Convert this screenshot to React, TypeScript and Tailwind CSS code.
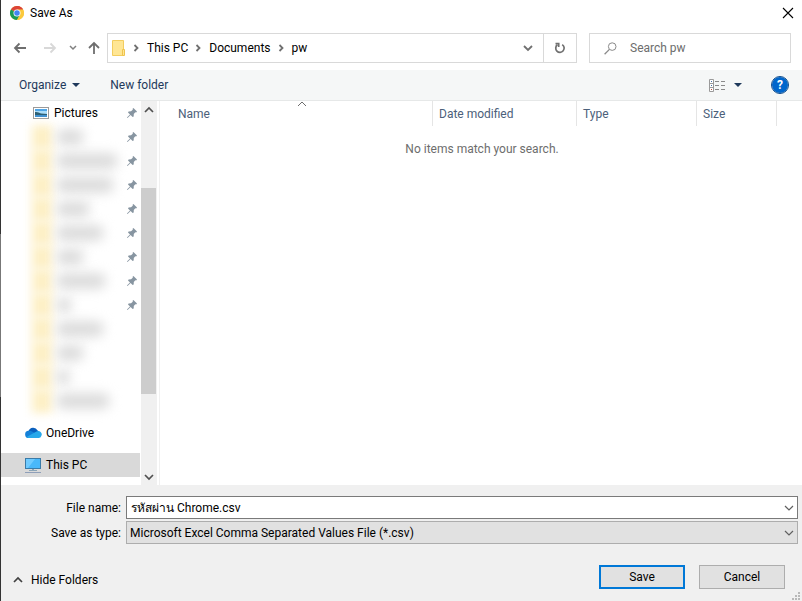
import React, { useState } from 'react';

const QUICK_ACCESS = [
  { id: 1, bar: 'w-[28px]', pinned: true },
  { id: 2, bar: 'w-[62px]', pinned: true },
  { id: 3, bar: 'w-[58px]', pinned: true },
  { id: 4, bar: 'w-[34px]', pinned: true },
  { id: 5, bar: 'w-[48px]', pinned: true },
  { id: 6, bar: 'w-[28px]', pinned: true },
  { id: 7, bar: 'w-[50px]', pinned: true },
  { id: 8, bar: 'w-[16px]', pinned: true },
  { id: 9, bar: 'w-[48px]', pinned: false },
  { id: 10, bar: 'w-[28px]', pinned: false },
  { id: 11, bar: 'w-[14px]', pinned: false },
  { id: 12, bar: 'w-[54px]', pinned: false },
];

const BREADCRUMBS = ['This PC', 'Documents', 'pw'];

function ChromeIcon() {
  return (
    <svg width="14" height="14" viewBox="0 0 48 48" aria-hidden="true">
      <circle cx="24" cy="24" r="24" fill="#fbc93c" />
      <path d="M24 24 L3.2 12 A24 24 0 0 1 44.8 12 Z" fill="#dc4437" />
      <path d="M24 12 H44.8 A24 24 0 0 0 24 0 Z" fill="#dc4437" />
      <path d="M3.2 12 A24 24 0 0 0 24 48 L34.4 30 L24 24 Z" fill="#1a9b58" />
      <path d="M24 12 H44.8 A24 24 0 0 1 24 48 L34.4 30 Z" fill="#fbc93c" />
      <circle cx="24" cy="24" r="12" fill="#fff" />
      <circle cx="24" cy="24" r="9.5" fill="#4285f4" />
    </svg>
  );
}

function Chevron({ dir, color = '#606060', width = 2 }: { dir: 'up' | 'down' | 'right'; color?: string; width?: number }) {
  const d = {
    up: 'M1 7 L5 3 L9 7',
    down: 'M1 3 L5 7 L9 3',
    right: 'M3.5 2 L6.5 5 L3.5 8',
  }[dir];
  return (
    <svg width="10" height="10" viewBox="0 0 10 10" fill="none" stroke={color} strokeWidth={width} aria-hidden="true">
      <path d={d} />
    </svg>
  );
}

function Arrow({ dir, color }: { dir: 'left' | 'right' | 'up'; color: string }) {
  const d = {
    left: 'M13 7 H2 M6.5 2.5 L2 7 L6.5 11.5',
    right: 'M1 7 H12 M7.5 2.5 L12 7 L7.5 11.5',
    up: 'M7 13 V2 M2 7 L7 2 L12 7',
  }[dir];
  return (
    <svg width="14" height="14" viewBox="0 0 14 14" fill="none" stroke={color} strokeWidth="1.8" aria-hidden="true">
      <path d={d} />
    </svg>
  );
}

function FolderIcon() {
  return (
    <svg width="14" height="17" viewBox="0 0 14 17" aria-hidden="true">
      <path d="M0.5 0.5 H11.5 V15.5 H0.5 Z" fill="#ffe694" stroke="#f3cd5f" />
      <path d="M10.5 9.5 H12.5 V15.5 H10.5 Z" fill="#ffe694" stroke="#efc44e" />
    </svg>
  );
}

function PinIcon() {
  return (
    <svg width="10" height="10" viewBox="0 0 10 10" aria-hidden="true">
      <path d="M6.4 0 L10 3.6 L9.2 4.5 L8.3 4.3 L6.8 6 L6.7 8.4 L5.6 9 L3.6 7 L0.8 9.8 L0 10 L0.2 9.2 L3 6.4 L1 4.4 L1.6 3.4 L4 3.3 L5.8 1.7 L5.6 0.8 Z" fill="#8795a1" />
    </svg>
  );
}

function PicturesIcon() {
  return (
    <svg width="16" height="12" viewBox="0 0 16 12" aria-hidden="true">
      <rect x="0.5" y="0.5" width="15" height="11" fill="#fff" stroke="#9a9a9a" />
      <rect x="2" y="2" width="12" height="8" fill="#a9dcf8" />
      <path d="M2 2 H14 V4 H2 Z" fill="#4fa5e6" />
      <path d="M2 5 Q5 4.5 8 6.5 L14 7 V8 H2 Z" fill="#2d5f73" />
      <path d="M2 8 H14 V10 H2 Z" fill="#3d8fd0" />
    </svg>
  );
}

function OneDriveIcon() {
  return (
    <svg width="17" height="12" viewBox="0 0 17 12" aria-hidden="true">
      <path d="M3.5 4 A5 5 0 0 1 12.6 3.4 A4 4 0 0 1 14 4.5 L8 9 L2 9 Z" fill="#0a5fbd" />
      <path d="M3.5 3.8 A4 4 0 0 1 7 4.6 L10 6 L4 11 A3.6 3.6 0 1 1 3.5 3.8 Z" fill="#1480d8" />
      <path d="M7 7 L11.5 4.5 A3.4 3.4 0 0 1 16.3 9 A3 3 0 0 1 13.8 11 H3.8 A4 4 0 0 1 1.5 10 Z" fill="#28a8ea" />
    </svg>
  );
}

function ComputerIcon() {
  return (
    <svg width="16" height="16" viewBox="0 0 16 16" aria-hidden="true">
      <rect x="0.5" y="1.5" width="15" height="10" fill="#49b8fa" stroke="#3a7ba8" />
      <path d="M1 2 H10 L3 11 H1 Z" fill="#70cbff" />
      <path d="M7 12 H9 V13 H12 V14 H4 V13 H7 Z" fill="#8ba5b8" />
      <path d="M0 15 H16 V16 H0 Z" fill="#8f9fb8" />
    </svg>
  );
}

function RefreshIcon() {
  return (
    <svg width="12" height="12" viewBox="0 0 12 12" fill="none" stroke="#707070" strokeWidth="1.7" aria-hidden="true">
      <path d="M8.2 2.6 A4.2 4.2 0 1 1 3.4 2.8" />
      <path d="M1.5 1.6 H4.7 V5" />
    </svg>
  );
}

function SearchIcon() {
  return (
    <svg width="13" height="13" viewBox="0 0 13 13" fill="none" stroke="#8a8a8a" aria-hidden="true">
      <circle cx="8.2" cy="4.6" r="3.8" />
      <path d="M5.4 7.4 L0.6 12.2" strokeWidth="1.3" />
    </svg>
  );
}

function ViewIcon() {
  return (
    <svg width="17" height="13" viewBox="0 0 17 13" aria-hidden="true">
      <path d="M0.5 0.5 H4.5 V12.5 H0.5 Z M0.5 4.5 H4.5 M0.5 8.5 H4.5" fill="#fff" stroke="#9a9a9a" />
      <path d="M2 2 H3 V3 H2 Z M2 6 H3 V7 H2 Z" fill="#4472a8" />
      <path d="M2 10 H3 V11 H2 Z" fill="#c04a3a" />
      <path d="M6 2.5 H10 M12 2.5 H16 M6 6.5 H10 M12 6.5 H16 M6 10.5 H10 M12 10.5 H16" stroke="#8a8a8a" />
    </svg>
  );
}

function Triangle() {
  return (
    <svg width="8" height="4" viewBox="0 0 8 4" aria-hidden="true">
      <path d="M0 0 H8 L4 4 Z" fill="#1e395b" />
    </svg>
  );
}

function ResizeGrip() {
  return (
    <svg width="8" height="8" viewBox="0 0 8 8" fill="#b8b8b8" aria-hidden="true">
      <path d="M6 0 H8 V2 H6 Z M3 3 H5 V5 H3 Z M6 3 H8 V5 H6 Z M0 6 H2 V8 H0 Z M3 6 H5 V8 H3 Z M6 6 H8 V8 H6 Z" />
    </svg>
  );
}

function Sidebar() {
  return (
    <nav aria-label="Folders" className="w-[139px] shrink-0">
      <a href="#pictures" className="flex h-6 items-center pl-8 pr-[3px]">
        <PicturesIcon />
        <span className="ml-[5px] flex-1">Pictures</span>
        <PinIcon />
      </a>
      {QUICK_ACCESS.map((item) => (
        <a key={item.id} href="#folder" aria-label="Hidden folder" className="flex h-6 items-center pl-[31px] pr-[3px]">
          <span className="h-6 w-5 bg-[#fdf0c6] blur-[5px]" />
          <span className={`ml-1 h-4 rounded-full bg-[#dcdcdc] blur-[6px] ${item.bar}`} />
          <span className="flex-1" />
          {item.pinned && <PinIcon />}
        </a>
      ))}
      <a href="#onedrive" className="mt-2 flex h-6 items-center pl-6">
        <OneDriveIcon />
        <span className="ml-1">OneDrive</span>
      </a>
      <a href="#this-pc" className="my-2 flex h-6 items-center bg-[#d9d9d9] pl-6">
        <ComputerIcon />
        <span className="ml-[5px]">This PC</span>
      </a>
    </nav>
  );
}

function Scrollbar() {
  return (
    <div className="ml-px flex w-4 shrink-0 flex-col bg-[#f0f0f0]">
      <button aria-label="Scroll up" className="flex h-[17px] items-center justify-center pr-px">
        <Chevron dir="up" color="#505050" width={1.7} />
      </button>
      <div className="flex-[70]" />
      <div className="mr-px flex-[206] bg-[#cdcdcd]" />
      <div className="flex-[74]" />
      <button aria-label="Scroll down" className="flex h-[17px] items-center justify-center pr-px">
        <Chevron dir="down" color="#505050" width={1.7} />
      </button>
    </div>
  );
}

function FileList() {
  const th = 'h-[25px] border-r border-[#e5e5e5] px-[6px] text-left font-normal';
  return (
    <main className="ml-[2px] flex-1 border-l border-[#f0f0f0] pl-3">
      <table className="w-full table-fixed border-separate border-spacing-0 text-[#4c607a]">
        <thead>
          <tr>
            <th className={`relative w-[261px] ${th}`}>
              Name
              <span className="absolute inset-x-0 top-0 flex h-[6px] items-center justify-center">
                <Chevron dir="up" color="#6d6d6d" width={1} />
              </span>
            </th>
            <th className={`w-[144px] ${th}`}>Date modified</th>
            <th className={`w-[120px] ${th}`}>Type</th>
            <th className={`w-[80px] ${th}`}>Size</th>
            <td />
          </tr>
        </thead>
        <tbody>
          <tr>
            <td colSpan={5} className="h-[46px] pr-[10px] text-center text-[#6d6d6d]">
              No items match your search.
            </td>
          </tr>
        </tbody>
      </table>
    </main>
  );
}

function App() {
  const [fileName, setFileName] = useState('รหัสผ่าน Chrome.csv');

  return (
    <div className="flex min-h-screen bg-white font-['Roboto','Noto_Sans',sans-serif] text-[12px] leading-4 text-black">
      <div className="w-px shrink-0 bg-[linear-gradient(#333_39%,#777_39%,#777_66%,#333_66%)]" />
      <div className="flex min-w-0 flex-1 flex-col">
        <header className="flex h-[25px] items-center pl-[9px] pr-2">
          <ChromeIcon />
          <h1 className="ml-[6px] flex-1">Save As</h1>
          <button aria-label="Close">
            <svg width="12" height="12" viewBox="0 0 12 12" stroke="#000" strokeWidth="1.1" aria-hidden="true">
              <path d="M1 1 L11 11 M11 1 L1 11" />
            </svg>
          </button>
        </header>

        <div className="flex items-center pb-[7px] pl-3 pr-[11px] pt-2">
          <button aria-label="Back"><Arrow dir="left" color="#6e6e6e" /></button>
          <button aria-label="Forward" className="ml-4"><Arrow dir="right" color="#d8d8d8" /></button>
          <button aria-label="Recent locations" className="ml-3">
            <svg width="8" height="8" viewBox="0 0 8 8" fill="none" stroke="#808080" strokeWidth="1.5" aria-hidden="true">
              <path d="M1 2 L4 5 L7 2" />
            </svg>
          </button>
          <button aria-label="Up" className="ml-[10px]"><Arrow dir="up" color="#6e6e6e" /></button>

          <div className="ml-[6px] flex h-[30px] min-w-0 flex-1 border border-[#d9d9d9]">
            <div className="flex flex-1 items-center pl-1">
              <FolderIcon />
              {BREADCRUMBS.map((name) => (
                <React.Fragment key={name}>
                  <span className="ml-[5px] mr-[6px]"><Chevron dir="right" color="#707070" width={1.8} /></span>
                  <button>{name}</button>
                </React.Fragment>
              ))}
            </div>
            <button aria-label="Previous locations" className="flex w-[30px] items-center justify-center">
              <Chevron dir="down" color="#707070" width={1.8} />
            </button>
            <button aria-label="Refresh" className="flex w-[33px] items-center justify-center border-l border-[#d9d9d9]">
              <RefreshIcon />
            </button>
          </div>

          <label className="ml-3 flex h-[30px] w-[202px] items-center border border-[#d9d9d9] pl-[14px]">
            <SearchIcon />
            <input
              type="text"
              aria-label="Search pw"
              placeholder="Search pw"
              className="ml-[13px] min-w-0 flex-1 outline-none placeholder:text-[#6d6d6d]"
            />
          </label>
        </div>

        <div className="flex h-[31px] items-center border-b border-[#e6e8e8] bg-[#f5f7f7] pl-[18px] pr-[14px] text-[#1e395b]">
          <button className="flex items-center gap-[6px]">
            Organize
            <Triangle />
          </button>
          <button className="ml-[30px]">New folder</button>
          <span className="flex-1" />
          <button aria-label="Change your view"><ViewIcon /></button>
          <button aria-label="More options" className="ml-2"><Triangle /></button>
          <button
            aria-label="Help"
            className="ml-[30px] flex size-4 items-center justify-center rounded-full bg-[#0066cc] font-bold text-white outline outline-[#0a4a8c]"
          >
            ?
          </button>
        </div>

        <div className="flex flex-1">
          <Sidebar />
          <Scrollbar />
          <FileList />
        </div>

        <footer className="relative bg-[#f0f0f0] pb-3 pt-[11px]">
          <div className="grid grid-cols-[120px_1fr] items-center gap-x-[5px] gap-y-[2px] pr-1">
            <label htmlFor="file-name" className="text-right">File name:</label>
            <div className="flex h-[23px] border border-[#7a7a7a] bg-white">
              <input
                id="file-name"
                type="text"
                value={fileName}
                onChange={(e) => setFileName(e.target.value)}
                className="min-w-0 flex-1 pl-1 outline-none"
              />
              <button aria-label="Previous file names" className="flex w-4 items-center justify-center">
                <Chevron dir="down" width={1.2} />
              </button>
            </div>
            <label htmlFor="file-type" className="text-right">Save as type:</label>
            <div className="relative h-[23px]">
              <select
                id="file-type"
                className="block h-full w-full appearance-none border border-[#adadad] bg-[#e1e1e1] pl-[3px]"
              >
                <option>Microsoft Excel Comma Separated Values File (*.csv)</option>
              </select>
              <span className="pointer-events-none absolute inset-y-0 right-0 flex w-[18px] items-center justify-center">
                <Chevron dir="down" width={1.2} />
              </span>
            </div>
          </div>

          <div className="mt-[21px] flex items-center gap-[14px] pl-3 pr-[17px]">
            <button className="mr-auto mt-[6px] flex items-center gap-2">
              <Chevron dir="up" color="#404040" width={1.7} />
              Hide Folders
            </button>
            <button className="h-6 w-[86px] border-2 border-[#0078d7] bg-[#e1e1e1]">Save</button>
            <button className="h-6 w-[86px] border border-[#adadad] bg-[#e1e1e1]">Cancel</button>
          </div>
          <span className="absolute bottom-px right-[2px]"><ResizeGrip /></span>
        </footer>
      </div>
    </div>
  );
}

export default App;
